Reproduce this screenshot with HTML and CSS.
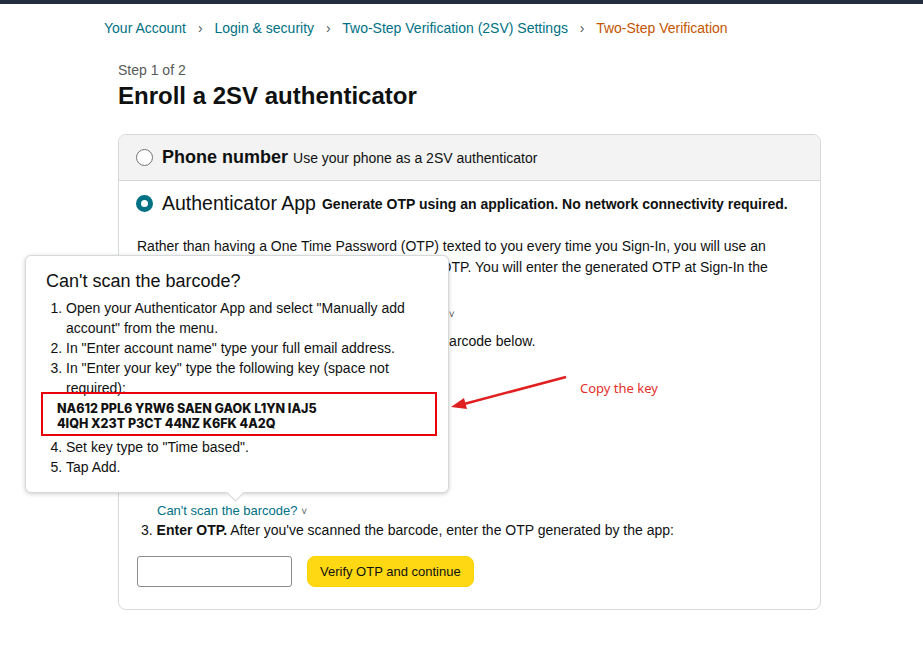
FILE: index.html
```html
<!DOCTYPE html>
<html lang="en">
<head>
    <meta charset="UTF-8">
    <meta name="viewport" content="width=device-width, initial-scale=1.0">
    <title>Two-Step Verification</title>
    <link rel="stylesheet" href="styles.css">
</head>
<body>
    <div class="topbar"></div>

    <div class="page">
        <nav class="crumbs">
            <a href="#">Your Account</a>
            <span class="sep">›</span>
            <a href="#">Login &amp; security</a>
            <span class="sep">›</span>
            <a href="#">Two-Step Verification (2SV) Settings</a>
            <span class="sep">›</span>
            <span class="current">Two-Step Verification</span>
        </nav>

        <div class="enroll">
            <div class="step">Step 1 of 2</div>
            <h1>Enroll a 2SV authenticator</h1>

            <div class="box">
                <div class="option phone">
                    <span class="radio"></span>
                    <span class="opt-title">Phone number</span>
                    <span class="opt-desc">Use your phone as a 2SV authenticator</span>
                </div>
                <div class="option app">
                    <span class="radio checked"></span>
                    <span class="opt-title">Authenticator App</span>
                    <span class="opt-desc bold">Generate OTP using an application. No network connectivity required.</span>
                </div>

                <div class="box-body">
                    <p class="intro">Rather than having a One Time Password (OTP) texted to you every time you Sign-In, you will use an authenticator app on your phone to generate the OTP. You will enter the generated OTP at Sign-In the same way as you would with text messages.</p>
                    <ol class="steps">
                        <li>Install an authenticator app on a phone. <a href="#">More</a> <span class="chev">˅</span></li>
                        <li>In the app, add a new account, then scan the barcode below.</li>
                    </ol>
                    <div class="barcode"></div>
                    <a class="cant-scan" href="#">Can't scan the barcode? <span class="chev">˅</span></a>
                    <p class="enter"><span class="num">3.</span> <b>Enter OTP.</b> After you've scanned the barcode, enter the OTP generated by the app:</p>
                    <div class="verify">
                        <input type="text" class="otp">
                        <button class="btn">Verify OTP and continue</button>
                    </div>
                </div>
            </div>
        </div>
    </div>

    <!-- popover opened from "Can't scan the barcode?" -->
    <div class="popover">
        <h3>Can't scan the barcode?</h3>
        <ol>
            <li>Open your Authenticator App and select "Manually add account" from the menu.</li>
            <li>In "Enter account name" type your full email address.</li>
            <li>In "Enter your key" type the following key (space not required):</li>
        </ol>
        <div class="key">NA612 PPL6 YRW6 SAEN GAOK L1YN IAJ5<br>4IQH X23T P3CT 44NZ K6FK 4A2Q</div>
        <ol start="4">
            <li>Set key type to "Time based".</li>
            <li>Tap Add.</li>
        </ol>
        <span class="tip"></span>
    </div>

    <!-- screenshot annotation -->
    <div class="note">
        <svg width="130" height="40" viewBox="0 0 130 40">
            <line x1="116" y1="3" x2="14" y2="30" stroke="#e02020" stroke-width="2.5"/>
            <polygon points="1,33 14,24 17,35" fill="#e02020"/>
        </svg>
        <span class="note-text">Copy the key</span>
    </div>
</body>
</html>
```

FILE: styles.css
```css
body {
    margin: 0;
    font-family: "Liberation Sans", Arial, sans-serif;
    font-size: 14px;
    color: #0f1111;
    background: #fff;
}

.topbar {
    height: 4px;
    background-color: #232f3e;
}

.page {
    padding-left: 104px;
}

.crumbs {
    padding-top: 14px;
    line-height: 20px;
    font-size: 14px;
}
.crumbs a {
    color: #007185;
    text-decoration: none;
}
.crumbs .sep {
    color: #565959;
    margin: 0 8px;
}
.crumbs .current {
    color: #c45500;
}

.enroll {
    margin-left: 14px;
    width: 703px;
}
.step {
    margin-top: 22px;
    font-size: 14px;
    color: #565959;
    line-height: 20px;
}
h1 {
    margin: 0;
    font-size: 24px;
    line-height: 32px;
    font-weight: bold;
}

.box {
    margin-top: 22px;
    border: 1px solid #d5d9d9;
    border-radius: 8px;
    overflow: hidden;
}
.option {
    display: flex;
    align-items: center;
    padding: 0 17px;
}
.option.phone {
    height: 45px;
    background-color: #f3f3f3;
    border-bottom: 1px solid #d5d9d9;
}
.option.app {
    height: 45px;
}
.radio {
    width: 17px;
    height: 17px;
    border: 1px solid #6f7373;
    border-radius: 50%;
    background: #fff;
    box-sizing: border-box;
    margin-right: 9px;
    flex: none;
}
.radio.checked {
    border: 5.5px solid #007185;
}
.opt-title {
    font-size: 18px;
    font-weight: bold;
    margin-right: 5px;
}
.app .opt-title {
    font-weight: normal;
    font-size: 19.5px;
    margin-right: 6px;
}
.opt-desc {
    font-size: 14px;
}
.opt-desc.bold {
    font-weight: bold;
}

.box-body {
    padding: 10px 17px 22px 18px;
}
.intro {
    margin: 0;
    line-height: 21px;
}
.steps {
    margin: 4px 0 0 0;
    padding-left: 21px;
}
.steps li {
    line-height: 21px;
    margin-bottom: 6px;
}
.steps a {
    color: #007185;
    text-decoration: none;
}
.steps .chev {
    margin-left: 5px;
}
.chev {
    font-size: 10px;
    color: #565959;
}
.barcode {
    height: 143px;
}
.cant-scan {
    display: block;
    margin-left: 20px;
    color: #007185;
    font-size: 13px;
    text-decoration: none;
    line-height: 20px;
}
.enter {
    margin: -2px 0 0 4px;
    line-height: 20px;
}
.verify {
    display: flex;
    gap: 15px;
    margin-top: 16px;
}
.otp {
    width: 155px;
    height: 31px;
    box-sizing: border-box;
    border: 1px solid #888c8c;
    border-radius: 3px;
}
.btn {
    height: 31px;
    padding: 0 12px;
    background-color: #ffd814;
    border: 1px solid #fcd200;
    border-radius: 8px;
    font-family: inherit;
    font-size: 13px;
    color: #0f1111;
}

.popover {
    position: absolute;
    left: 25px;
    top: 255px;
    width: 424px;
    height: 238px;
    box-sizing: border-box;
    padding: 12px 16px 0 16px;
    background: #fff;
    border: 1px solid #d5d9d9;
    border-radius: 6px;
    box-shadow: 0 1px 4px rgba(0, 0, 0, 0.2);
}
.popover h3 {
    margin: 0 0 4px 4px;
    font-size: 18px;
    font-weight: normal;
    line-height: 26px;
}
.popover ol {
    margin: 0;
    padding-left: 24px;
}
.popover li {
    line-height: 20px;
}
.key {
    position: relative;
    margin: -6px -5px 1px -1px;
    border: 2px solid #e8000b;
    padding: 7px 14px 3px 14px;
    font-family: "Inter", sans-serif;
    font-weight: 800;
    font-size: 12.5px;
    line-height: 15px;
    color: #111;
}
.tip {
    position: absolute;
    left: 203px;
    bottom: -7px;
    width: 12px;
    height: 12px;
    background: #fff;
    border-right: 1px solid #d5d9d9;
    border-bottom: 1px solid #d5d9d9;
    transform: rotate(45deg);
}

.note {
    position: absolute;
    left: 450px;
    top: 374px;
}
.note svg {
    display: block;
}
.note-text {
    position: absolute;
    left: 130px;
    top: 5px;
    font-family: "Noto Sans", sans-serif;
    font-size: 13px;
    color: #e4302a;
    white-space: nowrap;
}
```
